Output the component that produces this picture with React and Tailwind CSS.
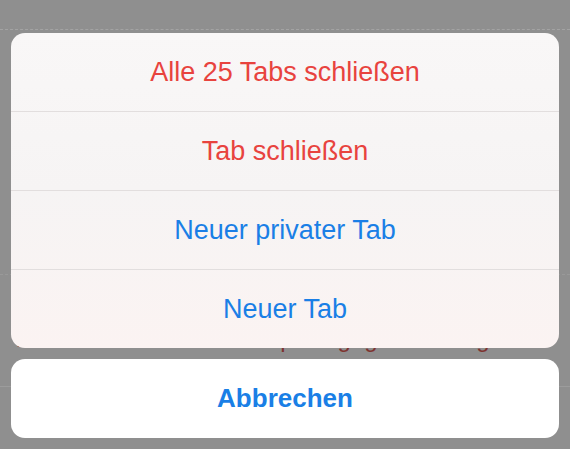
const actions = [
  { label: 'Alle 25 Tabs schließen', tone: 'red' },
  { label: 'Tab schließen', tone: 'red' },
  { label: 'Neuer privater Tab', tone: 'blue' },
  { label: 'Neuer Tab', tone: 'blue' },
];

export default function App() {
  return (
    <div className="relative w-[570px] h-[449px] overflow-hidden bg-[#8f8f8f] font-['Liberation_Sans',Arial,sans-serif]">
      {/* page behind the sheet, dimmed */}
      <div className="pt-[29px]">
        <div className="border-t border-dashed border-[#a3a3a3] h-[246px] border-b border-b-[#999999]" />
        <div className="h-[112px] border-b border-[#9c9c9c] pt-[50px] pl-[16px] whitespace-nowrap text-[24px] leading-[28px] text-[#7e3430]">
          Ks 2 Kann und muss 3 Spiele gegen Abstiegsk
        </div>
      </div>

      {/* action sheet */}
      <div className="absolute inset-0 flex flex-col gap-[11px] px-[11px] pt-[33px]">
        <div className="rounded-[14px] overflow-hidden bg-gradient-to-b from-[#f9f7f7] via-[#f6f4f4] to-[#fbf3f2]">
          {actions.map((a, i) => (
            <div
              key={a.label}
              className={`h-[78px] flex items-center justify-center text-[27px] ${
                i > 0 ? 'border-t border-[#e2dede] h-[79px]' : ''
              } ${a.tone === 'red' ? 'text-[#e8433e]' : 'text-[#1a7fe6]'}`}
            >
              {a.label}
            </div>
          ))}
        </div>
        <div className="h-[79px] rounded-[14px] bg-white flex items-center justify-center text-[26px] font-bold text-[#1a7fe6]">
          Abbrechen
        </div>
      </div>
    </div>
  );
}
